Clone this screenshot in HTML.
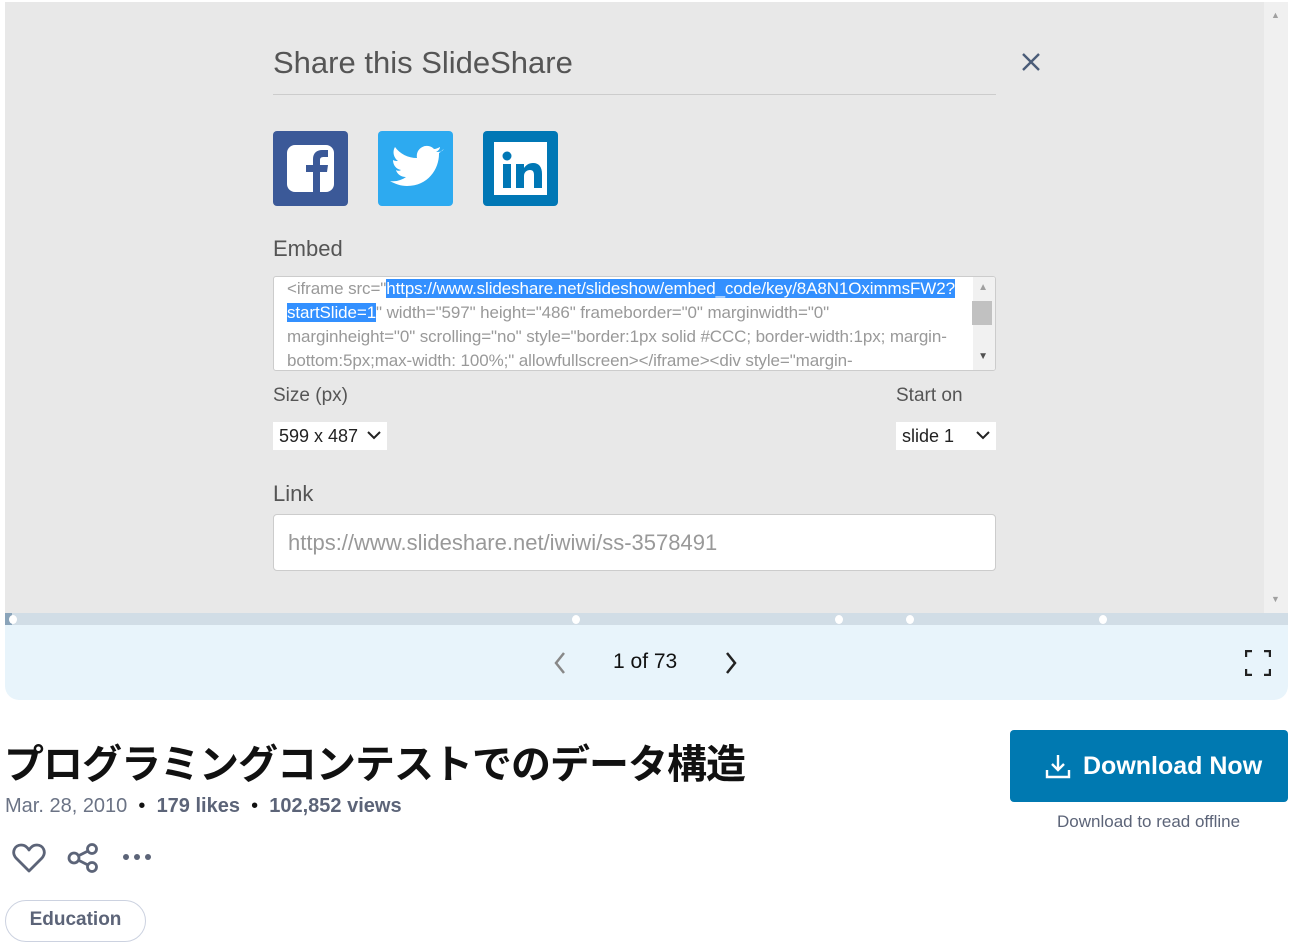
<!DOCTYPE html>
<html><head><meta charset="utf-8"><style>
*{box-sizing:border-box;margin:0;padding:0}
body{width:1314px;height:951px;background:#fff;font-family:"Liberation Sans",sans-serif;position:relative;overflow:hidden}
.a{position:absolute;white-space:nowrap}
#gray{left:5px;top:2px;width:1283px;height:611px;background:#e8e8e8}
#sb{left:1264px;top:2px;width:24px;height:611px;background:#f0f0f0}
#prog{left:5px;top:613px;width:1283px;height:12px;background:#d1dde6}
#ctrl{left:5px;top:625px;width:1283px;height:75px;background:#e8f4fb;border-radius:0 0 14px 14px}
.dot{position:absolute;top:615px;width:8px;height:9px;border-radius:50%;background:#fff}
.ta{left:273px;top:276px;width:723px;height:95px;background:#fff;border:1px solid #ccc;border-radius:3px;overflow:hidden}
.ln{position:absolute;left:13px;font-size:17px;color:#999;letter-spacing:-0.1px}
.hl{background:#3390ff;color:#fff}
.sel{background:#fff;font-size:18px;color:#222;height:28px;line-height:28px;padding-left:6px}
</style></head><body>
<div class="a" id="gray"></div>
<div class="a" id="sb"></div>
<div class="a" style="left:1271px;top:10px;font-size:9px;color:#a0a0a0">▲</div>
<div class="a" style="left:1271px;top:594px;font-size:9px;color:#a0a0a0">▼</div>
<div class="a" style="left:273px;top:45px;font-size:31px;color:#555">Share this SlideShare</div>
<div class="a" style="left:273px;top:94px;width:723px;height:1px;background:#ccc"></div>
<svg class="a" style="left:1020px;top:51px" width="22" height="22" viewBox="0 0 22 22"><path d="M3 3L19 19M19 3L3 19" stroke="#4a5c78" stroke-width="2.4"/></svg>
<svg class="a" style="left:273px;top:131px" width="75" height="75" viewBox="0 0 75 75"><rect width="75" height="75" rx="4" fill="#3b5998"/><rect x="14" y="14" width="47" height="47" rx="8" fill="#fff"/><path d="M40 61V41h-7v-7h7v-6c0-6 4-9 9-9h6v7h-4c-3 0-4 1-4 3v5h8l-1 7h-7v20z" fill="#3b5998"/></svg>
<svg class="a" style="left:378px;top:131px" width="75" height="75" viewBox="0 0 75 75"><rect width="75" height="75" rx="4" fill="#2daaf0"/><path d="M64 20c-2 1-4 1-6 1 2-1 4-3 4-5-2 1-4 2-6 2a10 10 0 0 0-17 9C30 27 22 23 17 16c-3 5-1 11 3 14-2 0-3 0-5-1 0 5 3 9 8 10-2 1-3 1-5 0 1 4 5 7 10 7-4 3-10 5-16 4 5 3 11 5 17 5 21 0 32-17 32-32v-1c2-1 3-3 5-4z" fill="#fff"/></svg>
<svg class="a" style="left:483px;top:131px" width="75" height="75" viewBox="0 0 75 75"><rect width="75" height="75" rx="4" fill="#0077b5"/><rect x="11" y="11" width="53" height="53" fill="#fff"/><rect x="20" y="33" width="8" height="24" fill="#0077b5"/><circle cx="24" cy="25" r="4.5" fill="#0077b5"/><path d="M33 33h8v4c2-3 5-5 9-5 6 0 9 4 9 11v14h-8V44c0-3-1-5-4-5s-6 2-6 6v12h-8z" fill="#0077b5"/></svg>
<div class="a" style="left:273px;top:236px;font-size:22px;color:#555">Embed</div>
<div class="a ta">
<div class="ln" style="top:2px"><span>&lt;iframe src="</span><span class="hl">https://www.slideshare.net/slideshow/embed_code/key/8A8N1OximmsFW2?</span></div>
<div class="ln" style="top:26px"><span class="hl">startSlide=1</span>" width="597" height="486" frameborder="0" marginwidth="0"</div>
<div class="ln" style="top:50px">marginheight="0" scrolling="no" style="border:1px solid #CCC; border-width:1px; margin-</div>
<div class="ln" style="top:74px">bottom:5px;max-width: 100%;" allowfullscreen&gt;&lt;/iframe&gt;&lt;div style="margin-</div>
<div style="position:absolute;right:0;top:0;width:22px;height:93px;background:#f1f1f1"></div>
<div style="position:absolute;right:3px;top:24px;width:20px;height:24px;background:#c1c1c1"></div>
<div style="position:absolute;right:7px;top:5px;font-size:10px;color:#a0a0a0">▲</div>
<div style="position:absolute;right:7px;top:74px;font-size:10px;color:#505050">▼</div>
</div>
<div class="a" style="left:273px;top:385px;font-size:19px;color:#555">Size (px)</div>
<div class="a" style="left:896px;top:385px;font-size:19px;color:#555">Start on</div>
<div class="a sel" style="left:273px;top:422px;width:114px">599 x 487</div>
<svg class="a" style="left:367px;top:431px" width="14" height="9" viewBox="0 0 14 9"><path d="M1 1l6 6 6-6" fill="none" stroke="#222" stroke-width="2"/></svg>
<div class="a sel" style="left:896px;top:422px;width:100px">slide 1</div>
<svg class="a" style="left:976px;top:431px" width="14" height="9" viewBox="0 0 14 9"><path d="M1 1l6 6 6-6" fill="none" stroke="#222" stroke-width="2"/></svg>
<div class="a" style="left:273px;top:481px;font-size:22px;color:#555">Link</div>
<div class="a" style="left:273px;top:514px;width:723px;height:57px;background:#fff;border:1px solid #ccc;border-radius:4px;font-size:22px;color:#999;padding:15px 0 0 14px">https://www.slideshare.net/iwiwi/ss-3578491</div>
<div class="a" id="prog"></div>
<div class="a" style="left:5px;top:613px;width:7px;height:12px;background:#8aa4ba"></div>
<div class="dot" style="left:9px"></div><div class="dot" style="left:572px"></div><div class="dot" style="left:835px"></div><div class="dot" style="left:906px"></div><div class="dot" style="left:1099px"></div>
<div class="a" id="ctrl"></div>
<svg class="a" style="left:553px;top:651px" width="14" height="24" viewBox="0 0 14 24"><path d="M11 2L3 12l8 10" fill="none" stroke="#888" stroke-width="2.5"/></svg>
<div class="a" style="left:613px;top:650px;font-size:21px;color:#111">1 of 73</div>
<svg class="a" style="left:724px;top:651px" width="14" height="24" viewBox="0 0 14 24"><path d="M3 2l8 10-8 10" fill="none" stroke="#222" stroke-width="2.5"/></svg>
<svg class="a" style="left:1245px;top:650px" width="26" height="26" viewBox="0 0 26 26"><path d="M1 7V1h6M19 1h6v6M25 19v6h-6M7 25H1v-6" fill="none" stroke="#222" stroke-width="2.4"/></svg>
<div class="a" style="left:4px;top:732px;font-size:40px;font-weight:bold;color:#111;font-family:'Liberation Sans','Noto Sans CJK JP',sans-serif;letter-spacing:-1px">プログラミングコンテストでのデータ構造</div>
<div class="a" style="left:5px;top:795px;font-size:20px;color:#6b7385">Mar. 28, 2010 <span style="color:#111">&nbsp;•&nbsp;</span> <b style="color:#5c6478">179 likes</b> <span style="color:#111">&nbsp;•&nbsp;</span> <b style="color:#5c6478">102,852 views</b></div>
<svg class="a" style="left:12px;top:842px" width="34" height="32" viewBox="0 0 34 32"><path d="M17 29L4 16C-1 10 3 3 9 3c4 0 6 2 8 5 2-3 4-5 8-5 6 0 10 7 5 13z" fill="none" stroke="#5c6478" stroke-width="2.8" stroke-linejoin="round"/></svg>
<svg class="a" style="left:66px;top:842px" width="34" height="32" viewBox="0 0 34 32"><circle cx="8" cy="16" r="5" fill="none" stroke="#5c6478" stroke-width="2.8"/><circle cx="26" cy="7" r="4.5" fill="none" stroke="#5c6478" stroke-width="2.8"/><circle cx="26" cy="25" r="4.5" fill="none" stroke="#5c6478" stroke-width="2.8"/><path d="M12 14l10-5M12 18l10 5" stroke="#5c6478" stroke-width="2.8"/></svg>
<svg class="a" style="left:122px;top:853px" width="30" height="8"><circle cx="4" cy="4" r="3" fill="#5c6478"/><circle cx="15" cy="4" r="3" fill="#5c6478"/><circle cx="26" cy="4" r="3" fill="#5c6478"/></svg>
<div class="a" style="left:5px;top:900px;width:141px;height:42px;border:1px solid #ccd2e0;border-radius:21px;font-size:19px;font-weight:bold;color:#5c6478;text-align:center;line-height:38px">Education</div>
<div class="a" style="left:1010px;top:730px;width:278px;height:72px;background:#0079b1;border-radius:4px"></div>
<svg class="a" style="left:1045px;top:753px" width="26" height="26" viewBox="0 0 26 26"><path d="M13 2v15M7 11l6 6 6-6M2 17v7h22v-7" fill="none" stroke="#fff" stroke-width="2.4"/></svg>
<div class="a" style="left:1083px;top:752px;font-size:25px;font-weight:bold;color:#fff">Download Now</div>
<div class="a" style="left:1057px;top:812px;font-size:17px;color:#5c6478">Download to read offline</div>
</body></html>
